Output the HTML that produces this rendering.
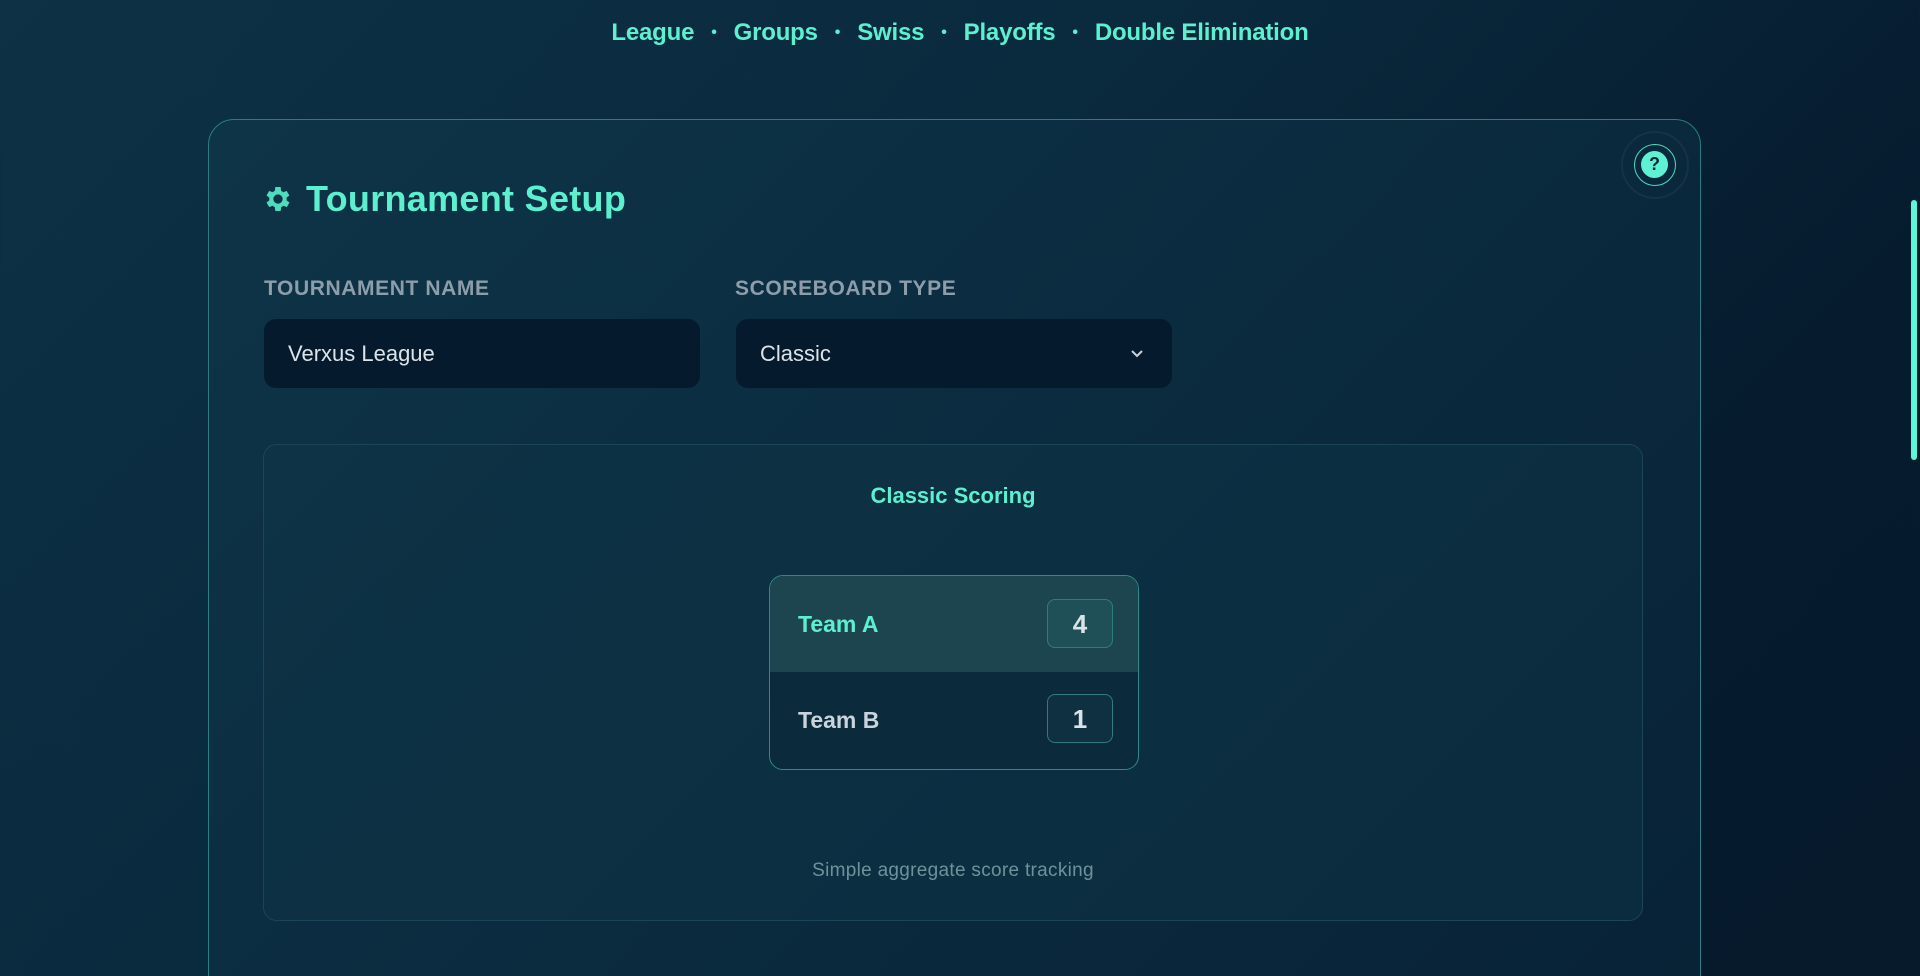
<!DOCTYPE html>
<html><head><meta charset="utf-8"><style>
*{margin:0;padding:0;box-sizing:border-box}
html,body{width:1920px;height:976px;overflow:hidden}
body{background:linear-gradient(135deg,#0e3145 0%,#0a2a3e 40%,#061b2e 75%,#061a2c 100%);font-family:"Liberation Sans",sans-serif;position:relative}
.nav{position:absolute;top:19px;left:0;width:1920px;text-align:center;color:#5cf0cf;font-size:24px;font-weight:bold;letter-spacing:-0.2px}
.nav span.d{display:inline-block;margin:0 17px;font-size:16px;vertical-align:3px}
.card{position:absolute;left:208px;top:119px;width:1493px;height:900px;border:1.5px solid #2a7d80;border-radius:26px;background:linear-gradient(135deg,#0e3448 0%,#0b2b3f 50%,#082236 100%)}
.help{position:absolute;left:1621px;top:131px;width:68px;height:68px;border-radius:50%;border:2px solid #13334a}
.help .r{position:absolute;left:11px;top:11px;width:42px;height:42px;border-radius:50%;border:1.5px solid #4fd9bb}
.help .c{position:absolute;left:6px;top:6px;width:27px;height:27px;border-radius:50%;background:#5ff2d2;color:#0a2636;font-weight:bold;font-size:18px;text-align:center;line-height:27px}
.title{position:absolute;left:262px;top:178px;color:#5cf0cf;font-size:36px;font-weight:bold;display:flex;align-items:center;gap:12px;letter-spacing:0.3px}
.lbl{position:absolute;top:277px;color:#8d9daa;font-size:21px;font-weight:bold;letter-spacing:0.6px}
.inp{position:absolute;top:319px;width:436px;height:69px;background:#051a2c;border-radius:12px;color:#dce4ea;font-size:22px;padding-left:24px;line-height:69px}
.panel{position:absolute;left:263px;top:444px;width:1380px;height:477px;border:1px solid #1c4657;border-radius:14px;background:rgba(16,54,70,0.45)}
.cs{position:absolute;left:263px;width:1380px;top:483px;text-align:center;color:#5cf0cf;font-size:22px;font-weight:bold}
.sb{position:absolute;left:769px;top:575px;width:370px;height:195px;border:1.5px solid #2e8a86;border-radius:14px;overflow:hidden;background:#0b2a3b}
.row{height:96px;position:relative}
.row.a{background:#1d4550}
.row .n{position:absolute;left:28px;top:0;line-height:96px;font-size:23px;font-weight:bold}
.row .s{position:absolute;right:25px;top:23px;width:66px;height:49px;border:1px solid #2f7d7b;border-radius:8px;text-align:center;line-height:49px;font-size:26px;font-weight:bold;color:#dbe3ea;background:rgba(40,100,100,0.35)}
.row.b .s{background:#0f3040;top:22px}
.sub{position:absolute;left:263px;width:1380px;top:860px;text-align:center;color:#6d939a;font-size:19px;letter-spacing:0.3px}
.scroll{position:absolute;left:1911px;top:200px;width:6px;height:260px;border-radius:3px;background:#5cf7d6}
</style></head><body>
<div class="nav">League<span class="d">•</span>Groups<span class="d">•</span>Swiss<span class="d">•</span>Playoffs<span class="d">•</span>Double Elimination</div>
<div class="card"></div>
<div class="help"><div class="r"><div class="c">?</div></div></div>
<div class="title"><svg width="32" height="32" viewBox="0 0 24 24"><path fill="#4fdcbd" d="M19.4 13a7.5 7.5 0 000-2l2.1-1.6-2-3.5-2.5 1a7 7 0 00-1.7-1L15 3h-4l-.4 2.9a7 7 0 00-1.7 1l-2.5-1-2 3.5L6.5 11a7.5 7.5 0 000 2l-2.1 1.6 2 3.5 2.5-1a7 7 0 001.7 1L11 21h4l.4-2.9a7 7 0 001.7-1l2.5 1 2-3.5zM13 15.5a3.5 3.5 0 110-7 3.5 3.5 0 010 7z" transform="translate(-1 0)"/></svg>Tournament Setup</div>
<div class="lbl" style="left:264px">TOURNAMENT NAME</div>
<div class="lbl" style="left:735px">SCOREBOARD TYPE</div>
<div class="inp" style="left:264px">Verxus League</div>
<div class="inp" style="left:736px">Classic<svg style="position:absolute;left:394px;top:30px" width="14" height="9" viewBox="0 0 14 9"><path d="M2 2l5 5 5-5" stroke="#c8d2da" stroke-width="2" fill="none"/></svg></div>
<div class="panel"></div>
<div class="cs">Classic Scoring</div>
<div class="sb">
<div class="row a"><div class="n" style="color:#5cf0cf">Team A</div><div class="s">4</div></div>
<div class="row b"><div class="n" style="color:#c9d3dc">Team B</div><div class="s">1</div></div>
</div>
<div class="sub">Simple aggregate score tracking</div>
<div class="scroll"></div>
</body></html>
